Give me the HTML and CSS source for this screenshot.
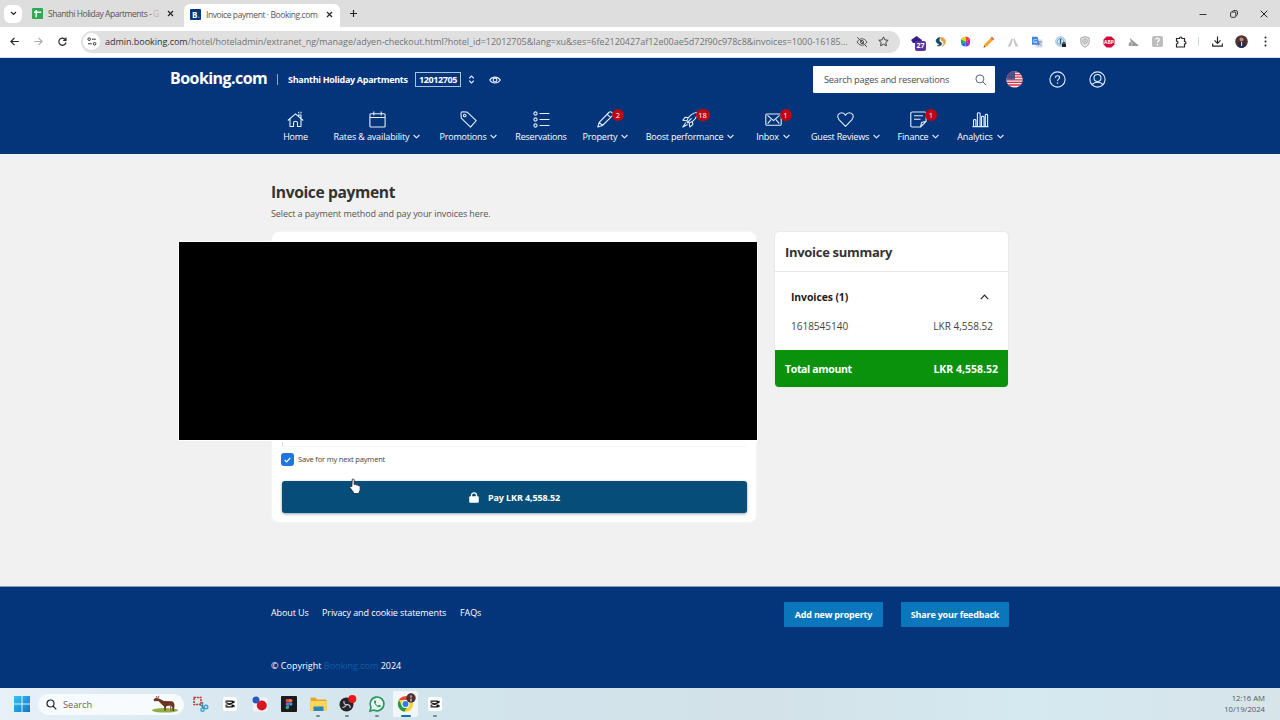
FILE: index.html
```html
<!DOCTYPE html>
<html lang="en">
<head>
<meta charset="utf-8">
<title>Invoice payment · Booking.com</title>
<link rel="stylesheet" href="styles.css">
</head>
<body>
<div class="screen">
  <div class="tabstrip">
    <div class="tab-search"><svg width="7" height="5" viewBox="0 0 7 5"><path d="M1 1l2.500 2.500L6 1" class="ink"/></svg></div>
    <div class="tab tab-idle">
      <svg width="11" height="11" viewBox="0 0 11 11"><rect width="11" height="11" rx="1" fill="#34a853"/><path d="M4.200 2v7.200M2 4.200h7.200" stroke="#fff" stroke-width="1.400"/></svg>
      <span class="tab-title t-sheet">Shanthi Holiday Apartments - <i>G</i></span>
      <svg class="x" width="7" height="7" viewBox="0 0 7 7"><path d="M1 1l5 5M6 1L1 6" class="ink"/></svg>
    </div>
    <div class="tab tab-active">
      <span class="fav">B<i>.</i></span>
      <span class="tab-title t-book">Invoice payment · Booking.com</span>
      <svg class="x" width="7" height="7" viewBox="0 0 7 7"><path d="M1 1l5 5M6 1L1 6" class="ink"/></svg>
    </div>
    <svg class="plus" width="9" height="9" viewBox="0 0 9 9"><path d="M4.500 1v7M1 4.500h7" class="ink"/></svg>
    <div class="winctl">
      <svg width="8" height="8" viewBox="0 0 8 8"><path d="M.5 4.500h7" stroke="#333" fill="none"/></svg>
      <svg width="8" height="8" viewBox="0 0 8 8"><path d="M2.300 1.800C2.500 1 3 .6 3.800.6H6a1.400 1.400 0 0 1 1.400 1.400v2.400c0 .7-.4 1.100-1 1.300" stroke="#333" fill="none"/><rect x=".6" y="2" width="5.200" height="5.300" rx="1" stroke="#333" fill="none"/></svg>
      <svg width="8" height="8" viewBox="0 0 8 8"><path d="M.7.7l6.600 6.600M7.300.7L.7 7.300" stroke="#222" fill="none"/></svg>
    </div>
  </div>

  <div class="toolbar">
    <div class="navbtns">
      <svg width="9" height="9" viewBox="0 0 9 9"><path d="M8.800 4.500H1M4.500.8L.9 4.500l3.600 3.700" class="ink"/></svg>
      <svg width="9" height="9" viewBox="0 0 9 9"><path d="M.2 4.500H8M4.500.8l3.600 3.700-3.600 3.700" stroke="#aaa" stroke-width="1.100" fill="none"/></svg>
      <svg width="9" height="9" viewBox="0 0 9 9"><path d="M7.600 2.900A3.600 3.600 0 1 0 8 5.300M8 .5v2.800H5.200" class="ink"/></svg>
    </div>
    <div class="omnibox">
      <span class="siteinfo"><svg width="10" height="9" viewBox="0 0 10 9" fill="none" stroke="#333"><circle cx="2.200" cy="2.200" r="1.300"/><path d="M5 2.200h3.800M1 6.800h3.800"/><circle cx="7.600" cy="6.800" r="1.300"/></svg></span>
      <span class="url"><b>admin.booking.com</b>/hotel/hoteladmin/extranet_ng/manage/adyen-checkout.html?hotel_id=12012705&amp;lang=xu&amp;ses=6fe2120427af12e00ae5d72f90c978c8&amp;invoices=1000-16185...</span>
      <svg width="12" height="12" viewBox="0 0 12 12" fill="none" stroke="#555"><path d="M1 6c2.600-4.300 7.400-4.300 10 0-2.600 4.300-7.400 4.300-10 0zM1.200 1.200l9.800 9.800"/><circle cx="6" cy="6" r="1.600"/></svg>
      <svg class="star" width="11" height="11" viewBox="0 0 11 11" fill="none" stroke="#444"><path d="M5.500.9l1.400 3 3.300.4-2.400 2.200.6 3.300-2.900-1.600-2.900 1.600.6-3.300L.8 4.300l3.300-.4z"/></svg>
    </div>
    <div class="exts">
      <span class="ext"><svg width="14" height="14" viewBox="0 0 14 14"><path d="M6.500 1L12 5l-1 3H3L1 5z" fill="#35208a"/></svg><b class="ext-count">27</b></span>
      <span class="ext"><svg width="12" height="12" viewBox="0 0 12 12"><path d="M5.200 1.500C1 1.500-.3 6 3 7.400c2 .8 1.400 2-.8 2.300C6 11 8.400 7.400 5.300 6 3.300 5 4.200 3 5.200 1.500z" fill="#164660" stroke="#164660" stroke-width=".6"/><path d="M6 1.500c5-.6 6.600 7 1 9 2.400-3 2-4.400 0-5.600C5.600 4 5.500 2.500 6 1.500z" fill="#e7a042" stroke="#e7a042" stroke-width=".5"/></svg></span>
      <span class="ext"><svg width="11" height="11" viewBox="0 0 11 11"><path d="M5.500 5.500V.5A5 5 0 0 1 10 3z" fill="#ff3b23"/><path d="M5.500 5.500L10 3v5z" fill="#ef168b"/><path d="M5.500 5.500L10 8a5 5 0 0 1-4.500 2.500z" fill="#982ad5"/><path d="M5.500 5.500v5A5 5 0 0 1 1 8z" fill="#147bf0"/><path d="M5.500 5.500L1 8V3z" fill="#0bb45c"/><path d="M5.500 5.500L1 3A5 5 0 0 1 5.500.5z" fill="#e8d323"/></svg></span>
      <span class="ext"><svg width="12" height="12" viewBox="0 0 12 12"><path d="M.6 11.400l.8-3L9 .8l2.200 2.200-7.600 7.600z" fill="#f3a42c"/><path d="M9 .8L11.200 3l-1.300 1.300-2.200-2.200z" fill="#e16d57"/><path d="M.6 11.400l.5-1.600 1.100 1.100z" fill="#333"/></svg></span>
      <span class="ext"><svg width="12" height="10" viewBox="0 0 12 10"><path d="M.8 9.500l4-8.500L5.800 2.500 3.600 9.500zM11.200 9.500L7.200 1 6.200 2.500l2.200 7z" fill="#c6c6c6"/></svg></span>
      <span class="ext"><svg width="12" height="12" viewBox="0 0 12 12"><rect x="4.500" y="3.500" width="7" height="8" fill="#d5dce5"/><path d="M1 .8h5.500l2 8H1z" fill="#4484dc"/><text x="1.800" y="6.800" font-size="6" fill="#fff" font-family="Open Sans,sans-serif">G</text><path d="M7 6h4M9 5v1c0 2-1 3-2 4m.5-3l3 3" stroke="#6a87ad" stroke-width=".7" fill="none"/></svg></span>
      <span class="ext"><svg width="12" height="12" viewBox="0 0 12 12"><circle cx="5.500" cy="5.500" r="4.700" fill="#eef8fd" stroke="#87b5d2"/><circle cx="5.500" cy="5.500" r="3.100" fill="none" stroke="#5ba3d0"/><path d="M5.500 2.800v5" stroke="#285777" stroke-width="1.400"/><rect x="7" y="7.500" width="4" height="3.500" rx=".5" fill="#222"/><path d="M8 7.500V6.400h2v1.100" stroke="#222" stroke-width=".8" fill="none"/></svg></span>
      <span class="ext"><svg width="10" height="12" viewBox="0 0 10 12" fill="none" stroke="#a9a9a9"><path d="M5 .7l4.200 1.200v4C9.200 8.500 7 10.400 5 11.300 3 10.400.8 8.500.8 5.900v-4z" fill="#e5e5e5"/><circle cx="5" cy="5.200" r="2.300"/><circle cx="5" cy="5.200" r=".5"/></svg></span>
      <span class="ext"><svg width="12" height="12" viewBox="0 0 12 12"><path d="M3.600.5h4.800l3.100 3.100v4.800l-3.100 3.100H3.600L.5 8.400V3.600z" fill="#d40b38"/><text x="6" y="8" text-anchor="middle" font-size="5" font-weight="700" fill="#fff" font-family="Open Sans,sans-serif">ABP</text></svg></span>
      <span class="ext"><svg width="11" height="10" viewBox="0 0 11 10"><path d="M.8 9V6.300L3 4.600 1.500.8l8.900 7.500V9z" fill="#999"/><path d="M3.800 5v4" stroke="#eee" stroke-width=".6"/></svg></span>
      <span class="ext"><svg width="11" height="11" viewBox="0 0 11 11"><rect width="11" height="11" rx="2" fill="#bdbdbd"/><path d="M3.600 3.500c.3-2 3.600-1.800 3.600.2C7.200 5 5.500 5 5.500 6.500M5.500 7.800V9.500" stroke="#fff" stroke-width="1.300" fill="none"/></svg></span>
      <span class="ext"><svg width="12" height="12" viewBox="0 0 12 12"><path d="M1.500 2.500h3c0-2 2.500-2 2.500 0h2.500v3c2 0 2 2.500 0 2.500v3h-8v-3c2-.2 2-2.600 0-2.800z" class="ink"/></svg></span>
    </div>
    <i class="sep"></i>
    <div class="exts tail">
      <span class="ext"><svg width="11" height="11" viewBox="0 0 11 11"><path d="M5.500.5v6.500M2.500 4.300l3 3 3-3M.7 7.500v2.700h9.600V7.500" class="ink"/></svg></span>
      <span class="ext"><svg width="13" height="13" viewBox="0 0 13 13"><circle cx="6.500" cy="6.500" r="6.300" fill="#513332"/><path d="M2.500 11.300c0-3 1.500-4.800 4-4.800s4 1.800 4 4.800a6.300 6.300 0 0 1-8 0z" fill="#252b48"/><circle cx="6.500" cy="4.500" r="2" fill="#c18a78"/><path d="M6 7h1.200v4H6z" fill="#d9d3da"/></svg></span>
      <span class="ext"><svg width="3" height="11" viewBox="0 0 3 11" fill="#222"><circle cx="1.500" cy="1.500" r="1"/><circle cx="1.500" cy="5.500" r="1"/><circle cx="1.500" cy="9.500" r="1"/></svg></span>
    </div>
  </div>

  <header class="header">
    <div class="brandrow">
      <span class="logo">Booking.com</span>
      <i class="brandsep"></i>
      <span class="property">Shanthi Holiday Apartments</span>
      <span class="pid">12012705</span>
      <svg class="updown" width="7" height="9" viewBox="0 0 7 9"><path d="M1.200 3.300l2.300-2.300 2.300 2.300M1.200 5.700L3.500 8l2.300-2.300" class="line"/></svg>
      <svg class="eye" width="12" height="8" viewBox="0 0 12 8"><path d="M.7 4C3.300.1 8.700.1 11.300 4 8.700 7.900 3.300 7.900.7 4z" class="line"/><circle cx="6" cy="4" r="1.900" class="line"/></svg>
      <div class="search"><span>Search pages and reservations</span><svg width="12" height="12" viewBox="0 0 12 12"><circle cx="4.900" cy="4.900" r="4" stroke="#52667c" fill="none"/><path d="M7.900 7.900l3.400 3.400" stroke="#52667c"/></svg></div>
      <svg class="flag" width="17" height="17" viewBox="0 0 17 17"><defs><clipPath id="fc"><circle cx="8.500" cy="8.500" r="8.200"/></clipPath></defs><g clip-path="url(#fc)"><path fill="#f5e9ef" d="M0 0h17v17H0z"/><path d="M0 1h17M0 3.600h17M0 6.200h17M0 8.800h17M0 11.400h17M0 14h17M0 16.600h17" stroke="#cc3a50" stroke-width="1.300"/><path fill="#444a80" d="M0 0h9v8.600H0z"/><path d="M1 2h8M1 4.500h8M1 7h8" stroke="#9296ba" stroke-width=".6" stroke-dasharray=".7 1"/></g></svg>
      <svg class="help" width="17" height="17" viewBox="0 0 17 17"><circle cx="8.500" cy="8.500" r="7.600" class="line"/><path d="M6.500 6.700c0-2.600 4.100-2.500 4.100-.1 0 1.600-2.100 1.500-2.100 3.500" class="line"/><circle cx="8.500" cy="12" r=".8" fill="#dceafa"/></svg>
      <svg width="17" height="17" viewBox="0 0 17 17"><circle cx="8.500" cy="8.500" r="7.600" class="line"/><circle cx="8.500" cy="7" r="3.500" class="line"/><path d="M3.200 13.700c2-3.300 8.600-3.300 10.600 0" class="line"/></svg>
    </div>
    <nav class="menu">
      <a class="m-home"><span class="ic"><svg width="17" height="17" viewBox="0 0 17 17"><path d="M.8 9.500l7.700-6.600 7.700 6.600M3 8v7.500h3.500V12c0-2.400 4-2.400 4 0v3.500H14V8M11.500 5V4H14v3.500M11.700.8v1.800M14 .8v1.800" class="line"/></svg></span><span class="lb">Home</span></a>
      <a class="m-rates"><span class="ic"><svg width="17" height="17" viewBox="0 0 17 17"><rect x=".9" y="2.700" width="15.200" height="13.300" rx="1" class="line"/><path d="M1 6.500h15M4.800.6v4M12.200.6v4" class="line"/></svg></span><span class="lb">Rates &amp; availability<svg width="7" height="5" viewBox="0 0 7 5"><path d="M.6 1l2.900 2.800L6.400 1" class="line"/></svg></span></a>
      <a class="m-promo"><span class="ic"><svg width="17" height="17" viewBox="0 0 17 17"><path d="M1 2.500C1 1.300 1.500.8 2.700.8l4.500.3 9 8.600-5.700 6.400L1.300 7.200z" class="line"/><circle cx="4.700" cy="4.500" r="1.300" class="line"/></svg></span><span class="lb">Promotions<svg width="7" height="5" viewBox="0 0 7 5"><path d="M.6 1l2.900 2.800L6.400 1" class="line"/></svg></span></a>
      <a class="m-res"><span class="ic"><svg width="17" height="17" viewBox="0 0 17 17"><circle cx="2.500" cy="2.500" r="1.600" class="line"/><circle cx="2.500" cy="8.500" r="1.600" class="line"/><circle cx="2.500" cy="14.500" r="1.600" class="line"/><path d="M6.500 2.500h10M6.500 8.500h10M6.500 14.500h10" class="line"/></svg></span><span class="lb">Reservations</span></a>
      <a class="m-prop"><span class="ic"><svg width="17" height="17" viewBox="0 0 17 17"><path d="M.8 16l1.400-4.700L11.800 1.500c2-2 5.300 1.200 3.400 3.300L5.500 14.500zM2.200 11.300l3.300 3.200M10 3.200l3.600 3.500" class="line"/></svg><b class="badge">2</b></span><span class="lb">Property<svg width="7" height="5" viewBox="0 0 7 5"><path d="M.6 1l2.900 2.800L6.400 1" class="line"/></svg></span></a>
      <a class="m-boost"><span class="ic"><svg width="17" height="17" viewBox="0 0 17 17"><path d="M4.800 9.600C7 4.500 10.500 1.800 15.300 1.200c-.2 5-2.800 8.700-8 10.900zM6.300 6.600L3 6.300.8 9.300l3.700.5M10.500 10.300l.3 3.300-3 2.400-.6-3.500M3.800 11.500L.8 16l4.700-2.500M5 12L9.500 7.300" class="line"/></svg><b class="badge wide">18</b></span><span class="lb">Boost performance<svg width="7" height="5" viewBox="0 0 7 5"><path d="M.6 1l2.900 2.800L6.400 1" class="line"/></svg></span></a>
      <a class="m-inbox"><span class="ic"><svg width="17" height="17" viewBox="0 0 17 17"><rect x=".8" y="3" width="15.400" height="11.300" rx="1" class="line"/><path d="M2.500 4.300l6 5.300 6-5.300M2.700 12.700l3.300-4M14.300 12.700l-3.300-4" class="line"/></svg><b class="badge">1</b></span><span class="lb">Inbox<svg width="7" height="5" viewBox="0 0 7 5"><path d="M.6 1l2.900 2.800L6.400 1" class="line"/></svg></span></a>
      <a class="m-guest"><span class="ic"><svg width="17" height="17" viewBox="0 0 17 17"><path d="M8.500 15.300L2 8.700C-.8 5.500 1.200 1.700 4.700 1.700c1.800 0 3 1 3.800 2.500.8-1.500 2-2.500 3.800-2.500 3.500 0 5.500 3.800 2.700 7z" class="line"/></svg></span><span class="lb">Guest Reviews<svg width="7" height="5" viewBox="0 0 7 5"><path d="M.6 1l2.900 2.800L6.400 1" class="line"/></svg></span></a>
      <a class="m-fin"><span class="ic"><svg width="17" height="17" viewBox="0 0 17 17"><path d="M10.500 16H2.200c-1 0-1.400-.4-1.400-1.300V2.300C.8 1.400 1.200 1 2.200 1h12.500c1 0 1.400.4 1.400 1.300v8zM10.500 16l1-4.500 4.600-1.200M4 4.800h9M4 8.300h6.500" class="line"/></svg><b class="badge">1</b></span><span class="lb">Finance<svg width="7" height="5" viewBox="0 0 7 5"><path d="M.6 1l2.900 2.800L6.400 1" class="line"/></svg></span></a>
      <a class="m-ana"><span class="ic"><svg width="17" height="17" viewBox="0 0 17 17"><path d="M.5 15.600h16M1.500 15.500V9.200c0-1 2.400-1 2.400 0v6.300M5.400 15.500V2.500c0-1 2.700-1 2.700 0v13M9.500 15.500V6c0-1 2.500-1 2.500 0v9.500M13.300 15.500V4c0-1 2.300-1 2.300 0v11.500" class="line"/></svg></span><span class="lb">Analytics<svg width="7" height="5" viewBox="0 0 7 5"><path d="M.6 1l2.900 2.800L6.400 1" class="line"/></svg></span></a>
    </nav>
  </header>

  <main class="main">
    <h1>Invoice payment</h1>
    <p class="lead">Select a payment method and pay your invoices here.</p>
    <div class="cols">
      <section class="paycard">
        <div class="field-edge"></div>
        <label class="save"><i class="check"><svg width="7" height="6" viewBox="0 0 7 6"><path d="M.7 3l1.900 1.900L6.300.8" stroke="#fff" stroke-width="1.200" fill="none"/></svg></i><span>Save for my next payment</span></label>
        <div class="pay"><svg width="10" height="11" viewBox="0 0 10 11"><rect x=".2" y="4.300" width="9.600" height="6.500" rx="1" fill="#fff"/><path d="M2.500 5V3.200c0-3 5-3 5 0V5" stroke="#fff" stroke-width="1.300" fill="none"/></svg><span>Pay LKR 4,558.52</span></div>
        <div class="redacted"></div>
        <svg class="cursor" width="13" height="17" viewBox="0 0 13 17"><path d="M3.300 1.200c1-.6 1.900 0 1.900 1v4.400c.8-.7 1.900-.3 2 .5.8-.6 1.900-.2 2 .7.9-.4 2 .1 2 1.200 0 3.200-.3 5-2 6.500H5.200C4 13.200 2 11.500 1 9.600c-.5-1 .8-1.700 1.800-.8z" fill="#fff" stroke="#223" stroke-width=".8"/></svg>
      </section>
      <aside class="summary">
        <h2>Invoice summary</h2>
        <div class="lines">
          <div class="row strong"><span>Invoices (1)</span><svg width="9" height="6" viewBox="0 0 9 6"><path d="M.8 5.200l3.700-4 3.700 4" class="ink"/></svg></div>
          <div class="row"><span>1618545140</span><span>LKR 4,558.52</span></div>
        </div>
        <div class="total"><span class="s-tot">Total amount</span><span>LKR 4,558.52</span></div>
      </aside>
    </div>
  </main>

  <footer class="footer">
    <div class="frow">
      <div class="links"><a class="f-about">About Us</a><a class="f-priv">Privacy and cookie statements</a><a>FAQs</a></div>
      <div class="fbtns"><span class="btn b-add">Add new property</span><span class="btn b-share">Share your feedback</span></div>
    </div>
    <p class="copy">© Copyright <em>Booking.com</em> 2024</p>
  </footer>

  <div class="taskbar">
    <svg class="start" width="16" height="16" viewBox="0 0 16 16"><defs><linearGradient id="wg" x2="1" y2="1"><stop stop-color="#35c3f4"/><stop offset="1" stop-color="#0c78cb"/></linearGradient></defs><path d="M0 0h7.500v7.500H0zM8.500 0H16v7.500H8.500zM0 8.500h7.500V16H0zM8.500 8.500H16V16H8.500z" fill="url(#wg)"/></svg>
    <div class="tsearch"><svg width="11" height="11" viewBox="0 0 11 11"><circle cx="4.500" cy="4.500" r="3.500" class="ink"/><path d="M7 7l3.300 3.300" class="ink"/></svg><span>Search</span>
      <svg class="okapi" width="28" height="18" viewBox="0 0 28 18"><ellipse cx="14" cy="15.300" rx="13" ry="2.300" fill="#8fb047"/><path d="M4 3l3 .2L9 4l4 2 8 .3c2 1 2.500 2.500 2.500 4.500L22.800 16h-1.300l-.3-4-2-1.500-4 .8-.5 4.500h-1.200l-.5-4.300-2.700-2.500L7.500 6l-4 .2L2.500 5z" fill="#6b3322"/><path d="M19.500 11l.5 5M14 12l-.5 4M5.500 1l.7 2.500M8 .8L7 3.500" stroke="#8a5b43"/></svg>
    </div>
    <div class="apps">
      <span class="app"><svg width="16" height="16" viewBox="0 0 16 16"><path d="M1 1.500h7v7H1z" fill="none" stroke="#b6382c" stroke-width="1.500" stroke-dasharray="2 .8"/><path d="M6 8l5.500 4M9.500 6v6" stroke="#5a7f95" stroke-width="1.400"/><circle cx="13" cy="11" r="1.800" fill="none" stroke="#38a2cf" stroke-width="1.400"/><circle cx="9.500" cy="13.700" r="1.600" fill="none" stroke="#38a2cf" stroke-width="1.400"/></svg></span>
      <span class="app"><svg width="14" height="14" viewBox="0 0 14 14"><rect width="14" height="14" rx="2.500" fill="#fff"/><path d="M2.500 4.200h6.800v1.200l2.200-1.300M2.500 9.800h6.800V8.600l2.200 1.300M2.500 5.500l9 3.400M2.500 8.500l9-3.400" stroke="#111" stroke-width="1.200" fill="none"/></svg></span>
      <span class="app"><svg width="16" height="16" viewBox="0 0 16 16"><rect x="1" y="1.500" width="14.500" height="14" rx="2" fill="#f3f3f5"/><circle cx="4" cy="4" r="3.500" fill="#2459c4"/><circle cx="9.800" cy="9.500" r="5" fill="#d31822"/></svg></span>
      <span class="app"><svg width="16" height="16" viewBox="0 0 16 16"><rect width="16" height="16" rx="1" fill="#1b1b1f"/><path d="M8 3H6.200a1.700 1.700 0 0 0 0 3.400H8z" fill="#e94a28"/><path d="M8 3h1.800a1.700 1.700 0 0 1 0 3.400H8z" fill="#f3705e"/><path d="M8 6.400H6.200a1.700 1.700 0 0 0 0 3.400H8z" fill="#9753f0"/><circle cx="9.800" cy="8.100" r="1.700" fill="#23abe8"/><path d="M8 9.800H6.200A1.700 1.700 0 1 0 8 11.500z" fill="#22bb76"/></svg></span>
      <span class="app open"><svg width="17" height="15" viewBox="0 0 17 15"><path d="M.5 1.500c0-.8.4-1 1-1h4l1.700 2h8.300c.7 0 1 .3 1 1V13c0 .7-.3 1-1 1h-14c-.7 0-1-.3-1-1z" fill="#e5a820"/><path d="M.5 4h16v9c0 .7-.3 1-1 1h-14c-.7 0-1-.3-1-1z" fill="#fcd657"/><path d="M3.500 9.500h10V14h-10z" fill="#2985bb"/></svg></span>
      <span class="app open"><svg width="17" height="17" viewBox="0 0 17 17"><circle cx="7.500" cy="8.500" r="7" fill="#25262a"/><path d="M5 5c-.5 3 1 3.600 2.600 3.700 2-.4 4 .5 3.500 3.300M7.600 8.700c-1.600 1-1.400 3-4 2.700" stroke="#c8c8ce" stroke-width="1.200" fill="none"/><circle cx="13.300" cy="2.900" r="4" fill="#ee1616"/></svg></span>
      <span class="app open"><svg width="16" height="16" viewBox="0 0 16 16"><path d="M1 15l1-3.700A6.900 6.900 0 1 1 4.800 14z" fill="#e9f6ef" stroke="#26985c" stroke-width="1.600"/><path d="M5.300 4.500c-1.500 1.800 2.500 6.800 5 6.700 1.300 0 1.700-1.200 1.500-1.700l-1.700-.8-1 1C8 9.300 7 8.400 6.600 7.200l.7-.9-.8-1.800z" fill="#26985c"/></svg></span>
      <span class="app current"><svg width="18" height="18" viewBox="0 0 18 18"><circle cx="8.500" cy="9" r="7.700" fill="#ffcf35"/><path d="M1.900 5.100a7.700 7.700 0 0 1 13.200 0H8.500z" fill="#e7493b"/><path d="M1.900 5.100a7.700 7.700 0 0 0 5.600 11.500l3.300-5.700L5 10.700z" fill="#249b4b"/><circle cx="8.500" cy="9" r="4" fill="#fff"/><circle cx="8.500" cy="9" r="3" fill="#2c7de5"/><circle cx="14" cy="3" r="4.700" fill="#4a302f"/><circle cx="14" cy="1.500" r="1.300" fill="#c18a78"/><path d="M13.400 3.500h1.200v3h-1.200z" fill="#ddd"/></svg></span>
      <span class="app open"><svg width="14" height="14" viewBox="0 0 14 14"><rect width="14" height="14" rx="2.500" fill="#fff"/><path d="M2.500 4.200h6.800v1.200l2.200-1.300M2.500 9.800h6.800V8.600l2.200 1.300M2.500 5.500l9 3.400M2.500 8.500l9-3.400" stroke="#111" stroke-width="1.200" fill="none"/></svg></span>
    </div>
    <div class="clock"><span>12:16 AM</span><span>10/19/2024</span></div>
  </div>
</div>
</body>
</html>
```
FILE: styles.css
```css
* { box-sizing: border-box; }
body { margin: 0; font-family: "Open Sans", "Noto Sans", sans-serif; color: #333; }
.screen { width: 1280px; height: 720px; overflow: hidden; display: flex; flex-direction: column; white-space: nowrap; }
svg { display: block; flex: none; overflow: visible; }
.ink { fill: none; stroke: #262626; stroke-width: 1.2; }
.line { fill: none; stroke: #e2effc; stroke-width: 1.1; stroke-linejoin: round; }

.tabstrip { height: 27px; flex: none; background: #dedede; display: flex; align-items: center; font-size: 8.5px; color: #555; }
.tab-search { width: 18px; height: 18px; margin-left: 4px; border-radius: 6px; background: #fff; display: flex; align-items: center; justify-content: center; }
.tab { display: flex; align-items: center; height: 23px; }
.tab-idle { width: 152px; margin-left: 10px; }
.tab-title { flex: 1; margin-left: 5px; }
.t-sheet { letter-spacing: -.46px; }
.t-sheet i { font-style: normal; color: #b5b5b5; }
.t-book { letter-spacing: -.41px; }
.tab-idle .x { margin-right: 10px; }
.tab-active { width: 156px; align-self: flex-end; background: #fff; border-radius: 6px 6px 0 0; padding: 0 7px 3px 6px; }
.fav { width: 11px; height: 11px; background: #0a357c; color: #fff; font-weight: 700; font-size: 8px; line-height: 11px; padding-left: 2px; border-radius: 1px; }
.fav i { color: #4bb6ee; font-style: normal; }
.plus { margin-left: 9px; }
.winctl { display: flex; gap: 22.5px; margin-left: auto; padding-right: 12px; }

.toolbar { height: 31px; flex: none; background: #fff; display: flex; align-items: center; border-bottom: 1px solid #d3dfe9; padding-bottom: 1px; }
.navbtns { display: flex; gap: 15px; padding-left: 10px; }
.omnibox { width: 819px; height: 22px; margin-left: 14px; border-radius: 11px; background: #e0e0e0; display: flex; align-items: center; padding: 0 11px 0 2px; }
.siteinfo { width: 17px; height: 17px; border-radius: 50%; background: #fff; display: flex; align-items: center; justify-content: center; }
.url { flex: 1; width: 0; margin-left: 5px; font-size: 9px; letter-spacing: -.03px; color: #737373; }
.url b { font-weight: 400; color: #333; }
.star { margin-left: 10px; }
.exts { display: flex; margin-left: 5px; }
.ext { width: 24px; height: 20px; display: flex; align-items: center; justify-content: center; position: relative; }
.ext-count { position: absolute; left: 10px; top: 9px; width: 11px; height: 10px; border-radius: 2px; background: #57359c; color: #fff; font-size: 7px; line-height: 10px; text-align: center; }
.sep { width: 1px; height: 9px; background: #ccd8e2; margin-left: 5px; }
.tail { margin-left: 6px; }

.header { height: 96px; flex: none; background: #04357a; color: #fff; }
.brandrow { height: 43px; padding-left: 170px; display: flex; align-items: center; }
.logo { width: 98px; font-size: 16px; font-weight: 700; letter-spacing: -.56px; margin-top: -4px; }
.brandsep { width: 1px; height: 11px; background: #8ea8cb; margin: 0 10px 0 9px; }
.property { width: 120px; font-size: 9px; font-weight: 700; letter-spacing: -.3px; }
.pid { width: 46px; height: 15px; margin-left: 7px; border: 1px solid #a9c1dd; font-size: 9px; font-weight: 700; letter-spacing: -.4px; line-height: 13px; text-align: center; }
.updown { margin-left: 7px; }
.eye { margin-left: 14px; }
.search { width: 182px; height: 27px; margin-left: 312px; background: #fff; border-radius: 1px; color: #4c4c4c; font-size: 9.2px; letter-spacing: -.2px; display: flex; align-items: center; justify-content: space-between; padding: 0 8px 0 11px; }
.flag { margin-left: 11px; }
.help { margin: 0 23px 0 26px; }
.menu { display: flex; padding: 10px 0 0 283px; }
.menu a { flex: none; display: flex; flex-direction: column; align-items: center; }
.menu .m-home { width: 25px; margin-right: 25px; }
.menu .m-rates { width: 88px; margin-right: 18px; }
.menu .m-promo { width: 59px; margin-right: 17px; }
.menu .m-res { width: 52px; margin-right: 16px; }
.menu .m-prop { width: 45px; margin-right: 18px; }
.menu .m-boost { width: 88px; margin-right: 22px; }
.menu .m-inbox { width: 34px; margin-right: 21px; }
.menu .m-guest { width: 69px; margin-right: 18px; }
.menu .m-fin { width: 41px; margin-right: 18px; }
.menu .m-ana { width: 47px; }
.ic { position: relative; height: 17px; }
.lb { display: flex; align-items: center; gap: 4px; font-size: 9px; font-weight: 500; line-height: 13px; margin-top: 2px; letter-spacing: -.2px; }
.m-rates .lb { letter-spacing: -.13px; }
.badge { position: absolute; left: 15px; top: -2px; width: 12px; height: 12px; border-radius: 6px; background: #bd0712; font-size: 7.5px; font-weight: 500; line-height: 12px; text-align: center; }
.badge.wide { width: 14px; left: 14px; }

.main { height: 432px; flex: none; background: #f1f1f1; padding: 27px 271px 0; }
h1 { margin: 0; font-size: 15.6px; line-height: 22px; font-weight: 700; letter-spacing: -.37px; }
.lead { margin: 4px 0 0; font-size: 9px; line-height: 13px; color: #555; letter-spacing: -.09px; }
.cols { display: flex; gap: 17px; margin-top: 11px; align-items: flex-start; }
.paycard { position: relative; flex: none; width: 486px; height: 292px; background: #fff; border-radius: 8px; padding: 210px 10px 0 11px; border: 1px solid #f5f5f5; }
.field-edge { height: 5px; border-left: 1px solid #ddd; border-bottom: 1px solid #f4f4f4; margin-left: -1px; }
.save { display: flex; align-items: center; margin: 6px 0 0 -2px; height: 13px; font-size: 7.5px; letter-spacing: -.17px; color: #444; }
.check { width: 13px; height: 13px; border-radius: 3px; background: #1f74de; margin-right: 4px; display: flex; align-items: center; justify-content: center; }
.save span { margin-top: -1px; }
.pay { height: 32px; margin: 15px -1px 0 -1px; border-radius: 3px; background: #074d79; color: #fff; display: flex; align-items: center; justify-content: center; gap: 9px; font-size: 9px; font-weight: 700; letter-spacing: -.12px; box-shadow: 0 1px 3px rgba(30, 70, 100, .5); }
.redacted { position: absolute; left: -94px; top: 9px; width: 580px; height: 200px; border: 1px solid #fff; background: #000; }
.cursor { position: absolute; left: 77px; top: 246px; }
.summary { flex: none; width: 235px; height: 157px; background: #fff; border: 1px solid #e9e9e9; border-radius: 5px; overflow: hidden; display: flex; flex-direction: column; }
h2 { margin: 0; height: 40px; border-bottom: 1px solid #e7e7e7; padding-left: 10px; font-size: 13px; line-height: 40px; font-weight: 700; letter-spacing: -.3px; }
.lines { height: 78px; padding: 14px 15px 0 16px; }
.row { display: flex; justify-content: space-between; align-items: center; height: 21px; margin-bottom: 8px; font-size: 10px; color: #444; }
.strong { font-weight: 700; font-size: 10.4px; letter-spacing: -.08px; color: #222; padding-right: 4px; }
.total { flex: 1; margin: 0 -1px -1px; padding: 0 11px; display: flex; justify-content: space-between; align-items: center; background: #0a920d; color: #fff; font-size: 10.5px; font-weight: 700; }
.s-tot { letter-spacing: -.35px; }

.footer { height: 102px; flex: none; background: #04357a; color: #fff; padding: 15px 271px 0; font-size: 9px; font-weight: 500; border-top: 1px solid #7d9cbb; }
.frow { display: flex; justify-content: space-between; height: 25px; }
.links { display: flex; line-height: 21px; letter-spacing: -.1px; }
.f-about { width: 51px; }
.f-priv { width: 138px; }
.fbtns { display: flex; gap: 18px; }
.btn { height: 25px; line-height: 25px; background: #0a76bb; border-radius: 1px; text-align: center; font-weight: 700; letter-spacing: -.2px; }
.b-add { width: 99px; }
.b-share { width: 108px; }
.copy { margin: 32px 0 0; line-height: 13px; }
.copy em { font-style: normal; color: #145ba5; }

.taskbar { height: 32px; flex: none; background: linear-gradient(90deg, #e8f0f8, #dceaf2 12%, #d2e4ec 35%, #d3e2e9 60%, #d5e9f0 80%, #d7e4ea); display: flex; align-items: center; }
.start { margin-left: 14px; }
.tsearch { width: 146px; height: 21px; margin-left: 8px; border-radius: 11px; background: #f8fbfd; display: flex; align-items: center; padding: 0 5px 0 8px; font-size: 9.2px; color: #666; }
.tsearch span { margin-left: 6px; }
.okapi { margin-left: auto; }
.apps { display: flex; align-items: center; margin-left: 2.5px; }
.app { position: relative; width: 29.25px; height: 26px; display: flex; align-items: center; justify-content: center; }
.open::after, .current::after { content: ""; position: absolute; left: 12.5px; bottom: 0; width: 4px; height: 2px; border-radius: 1px; background: #7b8890; }
.current::before { content: ""; position: absolute; left: 2px; top: 0; width: 25px; height: 26px; background: #f0f6f9; border-radius: 2px; }
.current svg { position: relative; }
.current::after { left: 10px; width: 10px; background: #1371b3; }
.clock { margin-left: auto; padding-right: 15px; display: flex; flex-direction: column; align-items: flex-end; font-size: 7.7px; line-height: 10.5px; color: #4d5960; margin-top: -1px; }
```
